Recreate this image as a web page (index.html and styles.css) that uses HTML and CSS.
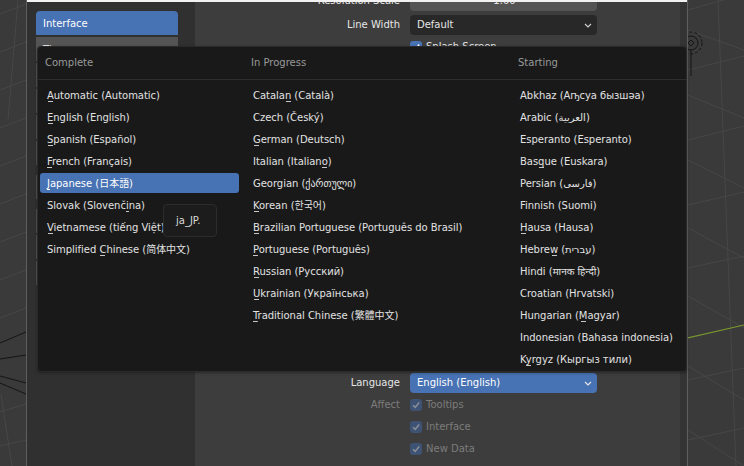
FILE: index.html
```
<!DOCTYPE html>
<html>
<head>
<meta charset="utf-8">
<link rel="stylesheet" href="styles.css">
</head>
<body>
<div class="screen">
  <div class="vp vp-left">
    <svg width="26" height="466" viewBox="0 0 26 466">
      <g stroke="#474747" stroke-width="1">
        <line x1="0" y1="14" x2="26" y2="4"/>
        <line x1="0" y1="52" x2="26" y2="42"/>
        <line x1="0" y1="90" x2="26" y2="80"/>
        <line x1="0" y1="128" x2="26" y2="118"/>
        <line x1="0" y1="166" x2="26" y2="156"/>
        <line x1="0" y1="204" x2="26" y2="194"/>
        <line x1="0" y1="242" x2="26" y2="232"/>
        <line x1="0" y1="280" x2="26" y2="270"/>
        <line x1="0" y1="318" x2="26" y2="308"/>
        <line x1="0" y1="412" x2="26" y2="404"/>
        <line x1="0" y1="446" x2="26" y2="440"/>
        <line x1="1" y1="395" x2="12" y2="466"/>
        <line x1="18" y1="0" x2="8" y2="120"/>
      </g>
      <g stroke="#141414" stroke-width="1">
        <line x1="0" y1="343" x2="26" y2="332"/>
        <line x1="0" y1="359" x2="26" y2="355"/>
        <line x1="0" y1="376" x2="26" y2="383"/>
        <line x1="0" y1="383" x2="26" y2="394"/>
      </g>
    </svg>
  </div>

  <div class="prefs">
    <div class="titlebar"></div>
    <div class="prefs-body">
      <nav class="sidebar">
        <div class="tab active">Interface</div>
        <div class="tab">Themes</div>
        <div class="tab">Viewport</div>
        <div class="tab">Lights</div>
        <div class="tab">Editing</div>
        <div class="tab">Animation</div>
        <div class="tab gap">Add-ons</div>
        <div class="tab gap">Input</div>
        <div class="tab">Navigation</div>
        <div class="tab">Keymap</div>
      </nav>

      <main class="main">
        <div class="group top">
          <div class="row">
            <div class="label">Resolution Scale</div>
            <div class="field num">1.00</div>
          </div>
          <div class="row row-lw">
            <div class="label">Line Width</div>
            <div class="field dd">
              <span>Default</span>
              <svg class="chev" width="8" height="5" viewBox="0 0 8 5"><path d="M1 1 L4 4 L7 1" fill="none" stroke="#cfcfcf" stroke-width="1.2"/></svg>
            </div>
          </div>
          <div class="row">
            <div class="label"></div>
            <div class="check">
              <span class="cb"><svg width="10" height="10" viewBox="0 0 10 10"><path d="M2 5.2 L4.2 7.4 L8.2 2.6" fill="none" stroke="#ffffff" stroke-width="1.5"/></svg></span>
              <span>Splash Screen</span>
            </div>
          </div>
          <div class="row">
            <div class="label"></div>
            <div class="check">
              <span class="cb"><svg width="10" height="10" viewBox="0 0 10 10"><path d="M2 5.2 L4.2 7.4 L8.2 2.6" fill="none" stroke="#ffffff" stroke-width="1.5"/></svg></span>
              <span>Developer Extras</span>
            </div>
          </div>
        </div>

        <div class="group bottom">
          <div class="row">
            <div class="label">Language</div>
            <div class="field dd sel">
              <span>English (English)</span>
              <svg class="chev" width="8" height="5" viewBox="0 0 8 5"><path d="M1 1 L4 4 L7 1" fill="none" stroke="#e8e8e8" stroke-width="1.2"/></svg>
            </div>
          </div>
          <div class="row dis">
            <div class="label">Affect</div>
            <div class="check">
              <span class="cb"><svg width="10" height="10" viewBox="0 0 10 10"><path d="M2 5.2 L4.2 7.4 L8.2 2.6" fill="none" stroke="#8a8f98" stroke-width="1.5"/></svg></span>
              <span>Tooltips</span>
            </div>
          </div>
          <div class="row dis">
            <div class="label"></div>
            <div class="check">
              <span class="cb"><svg width="10" height="10" viewBox="0 0 10 10"><path d="M2 5.2 L4.2 7.4 L8.2 2.6" fill="none" stroke="#8a8f98" stroke-width="1.5"/></svg></span>
              <span>Interface</span>
            </div>
          </div>
          <div class="row dis">
            <div class="label"></div>
            <div class="check">
              <span class="cb"><svg width="10" height="10" viewBox="0 0 10 10"><path d="M2 5.2 L4.2 7.4 L8.2 2.6" fill="none" stroke="#8a8f98" stroke-width="1.5"/></svg></span>
              <span>New Data</span>
            </div>
          </div>
        </div>
      </main>
      <div class="strip"></div>
    </div>

    <div class="menu">
      <div class="menu-head">
        <div class="head">Complete</div>
        <div class="head">In Progress</div>
        <div class="head">Starting</div>
      </div>
      <div class="menu-cols">
        <div class="col">
          <div class="item"><span class="k">A</span>utomatic (Automatic)</div>
          <div class="item"><span class="k">E</span>nglish (English)</div>
          <div class="item"><span class="k">S</span>panish (Español)</div>
          <div class="item"><span class="k">F</span>rench (Français)</div>
          <div class="item hl"><span class="k">J</span>apanese (日本語)</div>
          <div class="item">Slovak (Slovenč<span class="k">i</span>na)</div>
          <div class="item"><span class="k">V</span>ietnamese (tiếng Việt)</div>
          <div class="item">Simplified <span class="k">C</span>hinese (简体中文)</div>
        </div>
        <div class="col">
          <div class="item">Catala<span class="k">n</span> (Català)</div>
          <div class="item">Czech (Český)</div>
          <div class="item"><span class="k">G</span>erman (Deutsch)</div>
          <div class="item">Italian (Italian<span class="k">o</span>)</div>
          <div class="item">Georgian (ქართული)</div>
          <div class="item"><span class="k">K</span>orean (한국어)</div>
          <div class="item"><span class="k">B</span>razilian Portuguese (Português do Brasil)</div>
          <div class="item"><span class="k">P</span>ortuguese (Português)</div>
          <div class="item"><span class="k">R</span>ussian (Русский)</div>
          <div class="item"><span class="k">U</span>krainian (Українська)</div>
          <div class="item"><span class="k">T</span>raditional Chinese (繁體中文)</div>
        </div>
        <div class="col">
          <div class="item">Abkhaz (Аҧсуа бызшәа)</div>
          <div class="item">Arabic (العربية)</div>
          <div class="item">Esperanto (Esperanto)</div>
          <div class="item">Bas<span class="k">q</span>ue (Euskara)</div>
          <div class="item">Persian (فارسی)</div>
          <div class="item">Finnish (Suomi)</div>
          <div class="item"><span class="k">H</span>ausa (Hausa)</div>
          <div class="item">Hebre<span class="k">w</span> (עברית)</div>
          <div class="item">Hindi (मानक हिन्दी)</div>
          <div class="item">Croatian (Hrvatski)</div>
          <div class="item">Hungarian (<span class="k">M</span>agyar)</div>
          <div class="item">Indonesian (Bahasa indonesia)</div>
          <div class="item">K<span class="k">y</span>rgyz (Кыргыз тили)</div>
        </div>
      </div>
    </div>

    <div class="tip">ja_JP.</div>
  </div>

  <div class="vp vp-right">
    <svg width="56" height="466" viewBox="0 0 56 466">
      <g stroke="#474747" stroke-width="1">
        <line x1="0" y1="10" x2="56" y2="-6"/>
        <line x1="0" y1="30" x2="56" y2="50"/>
        <line x1="0" y1="70" x2="56" y2="56"/>
        <line x1="0" y1="95" x2="56" y2="118"/>
        <line x1="0" y1="140" x2="56" y2="126"/>
        <line x1="0" y1="160" x2="56" y2="188"/>
        <line x1="0" y1="205" x2="56" y2="192"/>
        <line x1="0" y1="228" x2="56" y2="258"/>
        <line x1="0" y1="268" x2="56" y2="256"/>
        <line x1="0" y1="296" x2="56" y2="328"/>
        <line x1="0" y1="380" x2="56" y2="368"/>
        <line x1="0" y1="366" x2="56" y2="400"/>
        <line x1="0" y1="430" x2="56" y2="466"/>
        <line x1="0" y1="440" x2="56" y2="428"/>
        <line x1="30" y1="0" x2="48" y2="466"/>
      </g>
      <line x1="-1" y1="338" x2="56" y2="325" stroke="#7a9a2e" stroke-width="1.2"/>
      <g fill="none" stroke="#141414" stroke-width="1">
        <circle cx="3" cy="43" r="11" stroke-dasharray="3 2"/>
        <circle cx="3" cy="43" r="7"/>
        <path d="M3 40 L6 43 L3 46 L0 43 Z"/>
        <line x1="3" y1="50" x2="3" y2="76"/>
      </g>
    </svg>
  </div>
</div>
</body>
</html>
```
FILE: styles.css
```
html, body {
  margin: 0;
  padding: 0;
}
body {
  width: 744px;
  height: 466px;
  overflow: hidden;
  background: #3a3a3a;
  font-family: "DejaVu Sans", "Noto Sans CJK JP", "Noto Sans", sans-serif;
  font-size: 10px;
  color: #e6e6e6;
}
.screen {
  display: flex;
  height: 466px;
}
.vp {
  flex: none;
  background: #3a3a3a;
  height: 466px;
  overflow: hidden;
}
.vp svg {
  display: block;
  overflow: visible;
}
.vp-left {
  width: 26px;
  border-right: 1px solid #5f5f5f;
}
.vp-right {
  width: 56px;
  border-left: 1px solid #5f5f5f;
}
.prefs {
  position: relative;
  flex: none;
  width: 660px;
  height: 466px;
  display: flex;
  flex-direction: column;
}
.titlebar {
  height: 2px;
  background: #f2f2f2;
  flex: none;
}
.prefs-body {
  flex: 1;
  display: flex;
  min-height: 0;
}
.sidebar {
  width: 168px;
  flex: none;
  box-sizing: border-box;
  background: #303030;
  padding: 9px 17px 0 9px;
  display: flex;
  flex-direction: column;
  gap: 2px;
}
.tab {
  height: 24px;
  line-height: 25px;
  padding-left: 7px;
  background: #545454;
  color: #e6e6e6;
}
.tab.gap {
  margin-top: 8px;
}
.tab.active {
  background: #4772b3;
  color: #ffffff;
  border-radius: 4px 4px 0 0;
}
.main {
  width: 485px;
  flex: none;
  box-sizing: border-box;
  background: #3d3d3d;
  display: flex;
  flex-direction: column;
  justify-content: space-between;
  padding-bottom: 8px;
  overflow: hidden;
}
.group {
  display: flex;
  flex-direction: column;
  gap: 2px;
}
.group.top {
  margin-top: -12px;
}
.row-lw {
  margin-top: 2px;
}
.row {
  display: grid;
  grid-template-columns: 205px 187px;
  column-gap: 10px;
  height: 20px;
  line-height: 22px;
  align-items: center;
}
.label {
  text-align: right;
  white-space: nowrap;
}
.field {
  height: 20px;
  box-sizing: border-box;
  border-radius: 4px;
  padding: 0 5px 0 7px;
  display: flex;
  align-items: center;
  white-space: nowrap;
}
.num {
  background: #545454;
  justify-content: center;
}
.dd {
  background: #282828;
  justify-content: space-between;
}
.dd.sel {
  background: #4772b3;
  color: #ffffff;
}
.chev {
  display: block;
}
.check {
  display: flex;
  align-items: center;
  gap: 4px;
  white-space: nowrap;
}
.cb {
  width: 12px;
  height: 12px;
  border-radius: 3px;
  background: #4772b3;
  display: flex;
  align-items: center;
  justify-content: center;
}
.dis .label,
.dis .check {
  color: #7c7c7c;
}
.dis .cb {
  background: #3e5273;
}
.strip {
  flex: 1;
  background: #343434;
}
.menu {
  position: absolute;
  left: 10px;
  top: 46px;
  width: 650px;
  height: 326px;
  box-sizing: border-box;
  background: #191919;
  border: 1px solid #2a2a2a;
  border-radius: 4px;
  box-shadow: 0 1px 3px rgba(0, 0, 0, 0.35);
}
.menu-head,
.menu-cols {
  display: grid;
  grid-template-columns: 199px 260px 1fr;
  column-gap: 7px;
  padding-left: 2px;
}
.menu-head {
  height: 32px;
  line-height: 32px;
  border-bottom: 1px solid #2e2e2e;
  color: #999999;
}
.head {
  padding-left: 5px;
}
.menu-cols {
  padding-top: 5px;
}
.col {
  display: flex;
  flex-direction: column;
  gap: 2px;
}
.item {
  height: 20px;
  line-height: 22px;
  padding-left: 7px;
  border-radius: 3px;
  white-space: nowrap;
  color: #e2e2e2;
  letter-spacing: -0.03px;
}
.item.hl {
  background: #4772b3;
  color: #ffffff;
}
.k {
  background: linear-gradient(#c8c8c8, #c8c8c8) no-repeat 50% 100% / 5px 1px;
  padding-bottom: 1px;
}
.hl .k {
  background-image: linear-gradient(#ffffff, #ffffff);
}
.tip {
  position: absolute;
  left: 136px;
  top: 204px;
  width: 54px;
  height: 33px;
  box-sizing: border-box;
  background: #1c1c1c;
  border: 1px solid #2c2c2c;
  border-radius: 4px;
  padding-left: 12px;
  line-height: 31px;
  color: #dadada;
  white-space: nowrap;
}
```
